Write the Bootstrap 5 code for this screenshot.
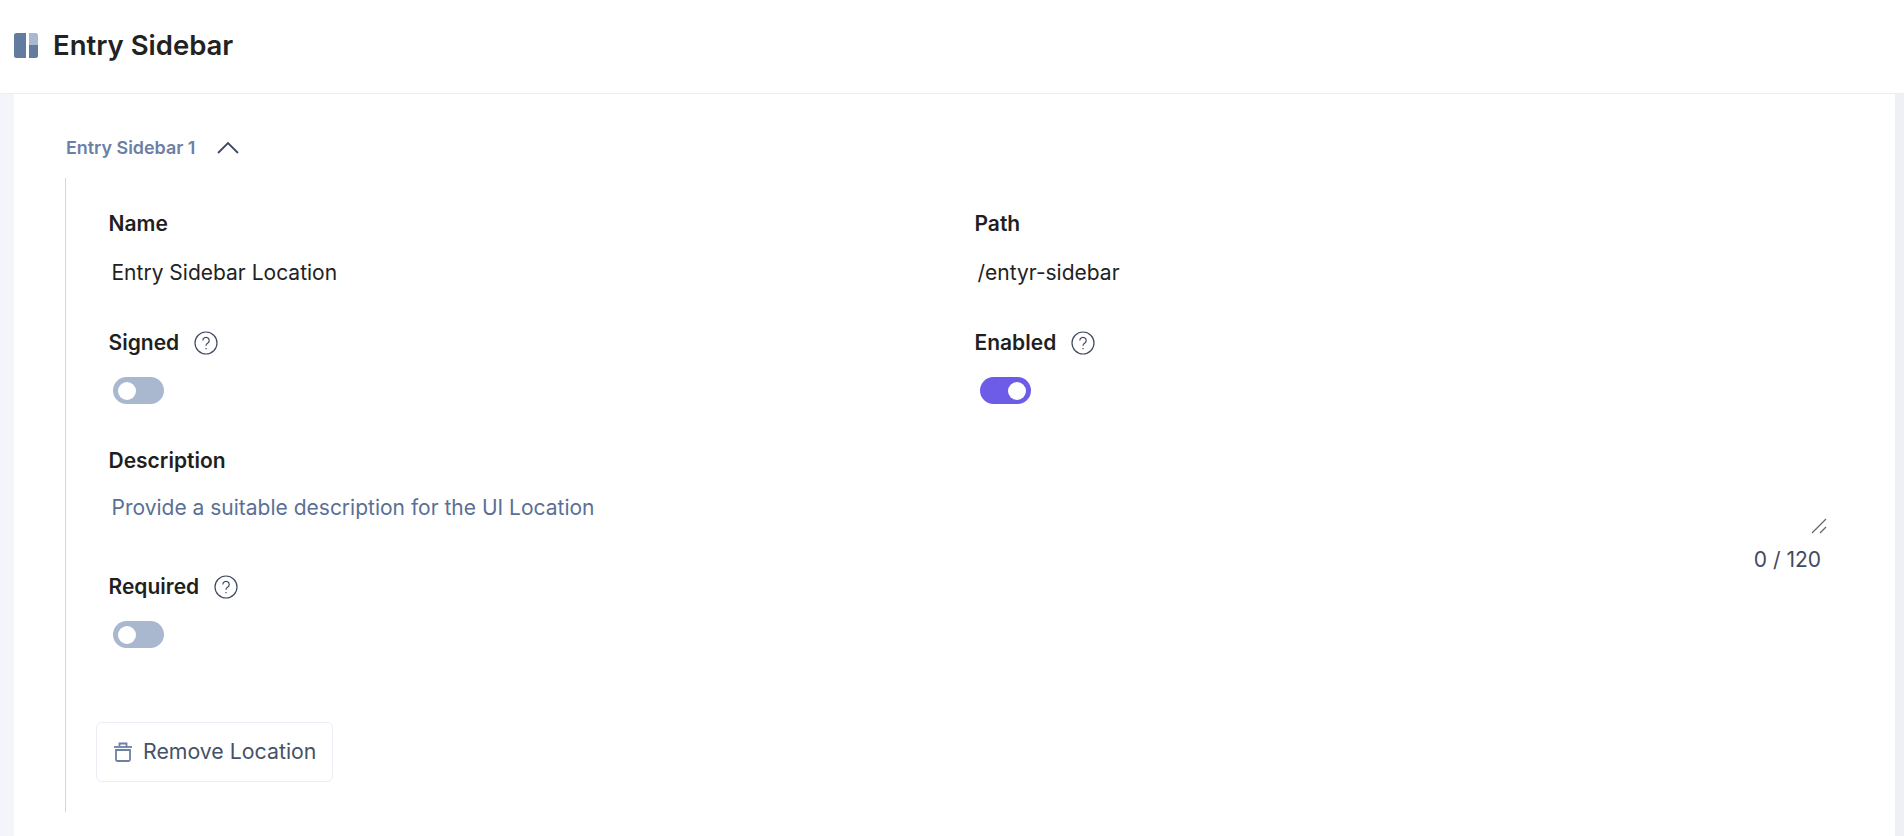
<!DOCTYPE html>
<html lang="en">
<head>
  <meta charset="UTF-8" />
  <meta name="viewport" content="width=device-width, initial-scale=1.0" />
  <title>Entry Sidebar</title>
  <link href="https://cdn.jsdelivr.net/npm/bootstrap@5.3.3/dist/css/bootstrap.min.css" rel="stylesheet" />
  <style>
    html, body {
      height: 100%;
    }

    body {
      background: linear-gradient(to right, #f4f5fa 14px, #eef0f6 14px);
      font-family: "Inter", "Liberation Sans", sans-serif;
      color: #1f1f1f;
      overflow: hidden;
    }

    .top-bar {
      height: 94px;
      padding: 0 0 2px 14px;
      background-color: #fff;
      border-bottom: 1px solid #eceef3;
    }

    .top-bar h1 {
      font-size: 27.500px;
      font-weight: 600;
      margin: 0 0 0 15px;
      color: #222;
    }

    .panel-area {
      margin: 0 9px 0 14px;
      height: 742px;
      padding: 42px 52px 0;
      background-color: #fff;
    }

    .group-toggle {
      height: 24px;
      font-size: 17.900px;
      font-weight: 600;
      color: #6c7fa5;
    }

    .group-toggle svg {
      margin-left: 5px;
    }

    .group-body {
      height: 634px;
      margin-top: 18px;
      margin-left: -1px;
      border-left: 1px solid #d5d7dc;
      padding: 33px 0 0 42.500px;
    }

    .field-label {
      font-size: 21px;
      font-weight: 600;
      line-height: 26px;
      color: #1f1f1f;
    }

    .field-value {
      font-size: 21px;
      line-height: 28px;
      padding-left: 3px;
      margin-top: 22px;
      color: #222;
    }

    .field-hint {
      color: #5a6f96;
      margin-top: 20px;
    }

    .form-col {
      width: 866px;
    }

    .help-icon {
      margin-left: -1px;
    }

    .toggle-row {
      margin-top: 43px;
    }

    .toggle-pill {
      width: 51px;
      height: 27px;
      margin: 21px 0 0 4.500px;
      padding: 0 5px;
      border-radius: 14px;
      background-color: #a9b8cf;
    }

    .toggle-pill.is-on {
      margin-left: 5px;
      background-color: #6c5ce7;
      justify-content: flex-end;
    }

    .toggle-knob {
      width: 18px;
      height: 18px;
      border-radius: 50%;
      background-color: #fff;
    }

    .desc-block {
      margin-top: 44px;
    }

    .desc-foot {
      margin: -4px 0 1px;
      padding-right: 16px;
    }

    .counter-text {
      margin: 13px 6px 0 0;
      font-size: 21px;
      line-height: 26px;
      color: #3f4a60;
    }

    .remove-btn {
      width: 237px;
      height: 60px;
      margin: 74px 0 0 -12.500px;
      border: 1px solid #eceef6;
      border-radius: 6px;
      font-size: 21.300px;
      color: #465268;
      background-color: #fff;
      white-space: nowrap;
    }

    .remove-btn svg {
      flex-shrink: 0;
      margin-right: 2px;
    }
  </style>
</head>
<body>

  <!-- Header -->
  <header class="top-bar d-flex align-items-center">
    <svg width="24" height="25" viewBox="0 0 24 25">
      <path d="M2.500 0H12v25H2.500A2.500 2.500 0 0 1 0 22.500v-20A2.500 2.500 0 0 1 2.500 0z" fill="#647ba0" />
      <path d="M15 0h6.500A2.500 2.500 0 0 1 24 2.500V12H15z" fill="#a9b8cf" />
      <path d="M15 12h9v10.500a2.500 2.500 0 0 1-2.500 2.500H15z" fill="#647ba0" />
    </svg>
    <h1>Entry Sidebar</h1>
  </header>

  <main class="panel-area">
    <div class="group-toggle d-flex align-items-center gap-3">
      <span>Entry Sidebar 1</span>
      <svg width="24" height="14" viewBox="0 0 24 14" fill="none" stroke="#3f4a60" stroke-width="1.800">
        <path d="M2 12 12 2l10 10" />
      </svg>
    </div>

    <div class="group-body">
      <div class="d-flex">
        <div class="form-col">
          <div class="field-label">Name</div>
          <div class="field-value">Entry Sidebar Location</div>
        </div>
        <div>
          <div class="field-label">Path</div>
          <div class="field-value">/entyr-sidebar</div>
        </div>
      </div>

      <div class="d-flex toggle-row">
        <div class="form-col">
          <div class="field-label d-flex align-items-center gap-3">
            Signed
            <svg class="help-icon" width="24" height="24" viewBox="0 0 24 24" fill="none" stroke="#3f4a60" stroke-width="1.200"><circle cx="12" cy="12" r="11" /><path d="M8.800 9.500a3.200 3.200 0 1 1 4.800 2.800c-1 .6-1.600 1.100-1.600 2.400" /><path d="M12 17v1.200" /></svg>
          </div>
          <div class="toggle-pill d-flex align-items-center"><span class="toggle-knob"></span></div>
        </div>
        <div>
          <div class="field-label d-flex align-items-center gap-3">
            Enabled
            <svg class="help-icon" width="24" height="24" viewBox="0 0 24 24" fill="none" stroke="#3f4a60" stroke-width="1.200"><circle cx="12" cy="12" r="11" /><path d="M8.800 9.500a3.200 3.200 0 1 1 4.800 2.800c-1 .6-1.600 1.100-1.600 2.400" /><path d="M12 17v1.200" /></svg>
          </div>
          <div class="toggle-pill is-on d-flex align-items-center"><span class="toggle-knob"></span></div>
        </div>
      </div>

      <div class="desc-block">
        <div class="field-label">Description</div>
        <div class="field-value field-hint">Provide a suitable description for the UI Location</div>
        <div class="d-flex flex-column align-items-end desc-foot">
          <svg width="16" height="16" viewBox="0 0 16 16" fill="none" stroke="#666" stroke-width="1.200"><path d="M1 15 15 1" /><path d="M9 15l6-6" /></svg>
          <span class="counter-text">0 / 120</span>
        </div>
      </div>

      <div>
        <div class="field-label d-flex align-items-center gap-3">
          Required
          <svg class="help-icon" width="24" height="24" viewBox="0 0 24 24" fill="none" stroke="#3f4a60" stroke-width="1.200"><circle cx="12" cy="12" r="11" /><path d="M8.800 9.500a3.200 3.200 0 1 1 4.800 2.800c-1 .6-1.600 1.100-1.600 2.400" /><path d="M12 17v1.200" /></svg>
        </div>
        <div class="toggle-pill d-flex align-items-center"><span class="toggle-knob"></span></div>
      </div>

      <button type="button" class="remove-btn btn d-flex align-items-center gap-2 ps-3 pe-0">
        <svg width="20" height="20" viewBox="0 0 20 20" fill="none" stroke="#6c7fa5" stroke-width="1.800"><path d="M1 5h18" /><path d="M6.500 5V1.500h7V5" /><path d="M3 8h14v9.500a1.500 1.500 0 0 1-1.500 1.500h-11A1.500 1.500 0 0 1 3 17.500z" /></svg>
        Remove Location
      </button>
    </div>
  </main>

  <script src="https://cdn.jsdelivr.net/npm/bootstrap@5.3.3/dist/js/bootstrap.bundle.min.js"></script>
</body>
</html>
